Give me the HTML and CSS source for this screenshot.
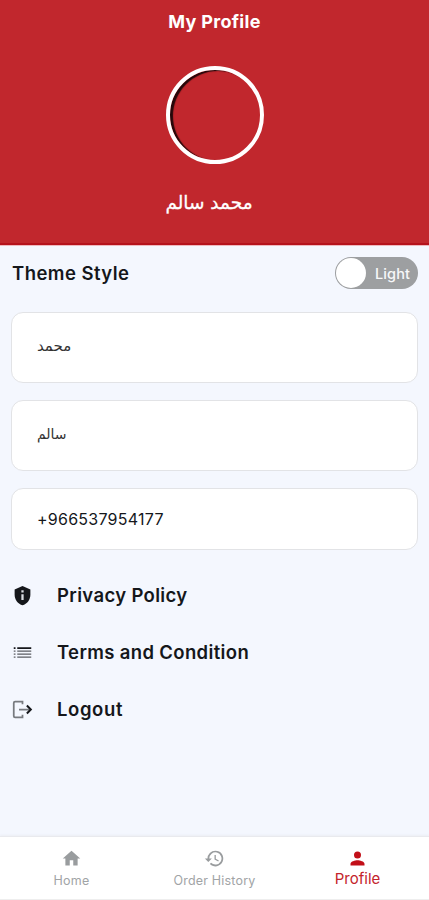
FILE: index.html
```html
<!DOCTYPE html>
<html lang="en">
<head>
<meta charset="utf-8">
<meta name="viewport" content="width=device-width, initial-scale=1">
<title>My Profile</title>
<link rel="stylesheet" href="styles.css">
</head>
<body>
<header class="hero">
  <h1 class="title">My Profile</h1>
  <div class="avatar"></div>
  <div class="name" lang="ar">محمد سالم</div>
</header>
<main class="content">
  <div class="theme"><span class="label theme-label">Theme Style</span>
    <div class="switch"><span class="knob"></span><span class="switch-text">Light</span></div>
  </div>
  <div class="field"><span class="ar first" lang="ar">محمد</span></div>
  <div class="field"><span class="ar last" lang="ar">سالم</span></div>
  <div class="field phone"><span>+966537954177</span></div>
  <nav class="links">
    <a class="link"><svg viewBox="0 0 24 24"><path fill="#15171b" d="M12 1 3 5v6c0 5.550 3.840 10.740 9 12 5.160-1.260 9-6.450 9-12V5z"/><path fill="#d9dce2" d="M10.700 6h2.600v2.500h-2.600zM10.700 10.500h2.600V17h-2.600z"/></svg><span class="label privacy">Privacy Policy</span></a>
    <a class="link"><svg viewBox="0 0 24 24"><path fill="#15171b" d="M2 6h2v2H2zM6 6h16v2H6z"/><path fill="#5b5e63" d="M2 9.700h2v1.500H2zM6 9.700h16v1.500H6zM2 13h2v1.500H2zM6 13h16v1.500H6zM2 16.500h2V18H2zM6 16.500h16V18H6z"/></svg><span class="label terms">Terms and Condition</span></a>
    <a class="link"><svg viewBox="0 0 24 24" fill="none" stroke-width="2"><path stroke="#777a7f" d="M12 6V3H3.500Q2 3 2 4.500v15Q2 21 3.500 21H12v-3M8 12h12"/><path stroke="#15171b" stroke-width="2.300" d="m17 7.500 4.500 4.500-4.500 4.500"/></svg><span class="label logout">Logout</span></a>
  </nav>
</main>
<footer class="tabs">
  <a class="tab"><svg viewBox="0 0 24 24"><path fill="#999c9e" d="M10 20v-6h4v6h5v-8h3L12 3 2 12h3v8z"/></svg><span class="home">Home</span></a>
  <a class="tab"><svg viewBox="0 0 24 24"><path fill="#999c9e" d="M13 3a9 9 0 0 0-9 9H1l3.890 3.890.070.140L9 12H6a7 7 0 1 1 2.060 4.940l-1.420 1.420A9 9 0 1 0 13 3zm-1 5v5l4.280 2.540.720-1.210-3.500-2.080V8z"/></svg><span class="history">Order History</span></a>
  <a class="tab active"><svg viewBox="0 0 24 24"><path fill="#c20f18" d="M12 12a4 4 0 1 0 0-8 4 4 0 0 0 0 8zm0 2c-2.670 0-8 1.340-8 4v2h16v-2c0-2.660-5.330-4-8-4z"/></svg><span class="profile">Profile</span></a>
</footer>
</body>
</html>
```
FILE: styles.css
```css
* { box-sizing: border-box; }
body {
  margin: 0;
  height: 900px;
  display: flex;
  flex-direction: column;
  background: #f4f7fe;
  color: #15171b;
  font-family: Inter, Roboto, "DejaVu Sans", sans-serif;
}
.hero {
  height: 246px;
  flex: none;
  display: flex;
  flex-direction: column;
  align-items: center;
  background: #c1272d;
  border-bottom: 1px solid #eeb9bf;
  box-shadow: inset 0 -2px #b5121c;
}
.title {
  margin: 10px 0 0;
  font-size: 18px;
  line-height: 24px;
  font-weight: 700;
  color: #fff;
  letter-spacing: .3px;
}
.avatar {
  width: 98px;
  height: 98px;
  margin-top: 32px;
  border: 4px solid #fff;
  border-radius: 50%;
  box-shadow: inset 3px 1px 1px #25080a;
}
.name {
  margin: 24px 11px 0 0;
  font-size: 18.500px;
  line-height: 30px;
  color: #fff;
  font-family: "DejaVu Sans", sans-serif;
  -webkit-text-stroke: .3px #fff;
}
.content { flex: 1; padding: 11px 11px 0 11px; }
.theme {
  height: 32px;
  display: flex;
  align-items: center;
  justify-content: space-between;
  margin-bottom: 23px;
  padding-left: 1px;
}
.label { font-size: 18.500px; line-height: 24px; font-weight: 600; white-space: nowrap; }
.theme-label { letter-spacing: .45px; }
.switch {
  width: 83px;
  height: 32px;
  display: flex;
  align-items: center;
  border-radius: 16px;
  background: #9d9fa1;
  padding: 0 8px 0 1px;
  color: #f7f8f9;
  font-size: 14.500px;
  font-weight: 500;
  justify-content: space-between;
}
.knob { width: 30px; height: 30px; border-radius: 50%; background: #fff; }
.switch-text { letter-spacing: .1px; }
.field {
  height: 71px;
  margin-bottom: 17px;
  padding-left: 25px;
  display: flex;
  align-items: center;
  background: #fff;
  border: 1px solid #e2e3e6;
  border-radius: 12px;
}
.ar { font-family: "DejaVu Sans", sans-serif; font-size: 15px; line-height: 20px; margin-bottom: 4px; color: #333; }
.last { font-size: 14px; }
.phone { height: 62px; font-size: 16px; letter-spacing: .25px; }
.links { margin-top: 33px; display: flex; flex-direction: column; gap: 33px; }
.link { height: 24px; display: flex; align-items: center; gap: 24px; padding-left: 1px; }
.link svg { width: 21px; height: 21px; }
.privacy, .terms { letter-spacing: .35px; }
.logout { letter-spacing: .6px; }
.tabs {
  height: 64px;
  flex: none;
  display: grid;
  grid-template-columns: repeat(3, 1fr);
  background: #fff;
  border-top: 1px solid #e9eaee;
  border-bottom: 1px solid #eee;
  box-shadow: 0 -1px 2px #eceef4;
}
.tab {
  display: flex;
  flex-direction: column;
  align-items: center;
  padding-top: 11px;
  color: #a1a4a6;
  font-size: 12.500px;
  letter-spacing: .2px;
  line-height: 18px;
}
.tab svg { width: 21px; height: 21px; margin-bottom: 3px; flex: none; }
.active { color: #c4232b; font-size: 15px; letter-spacing: 0; }
.active svg { margin-bottom: 1px; }
```
